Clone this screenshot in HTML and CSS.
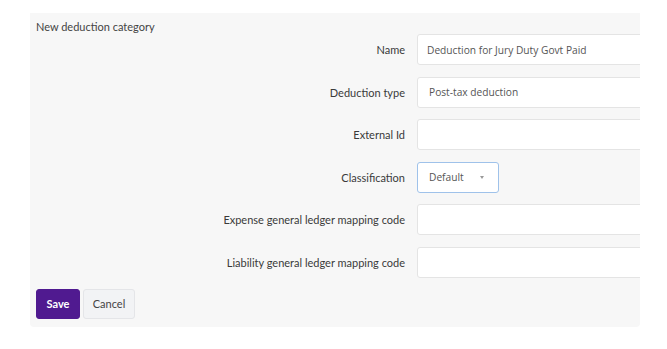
FILE: index.html
```html
<!DOCTYPE html>
<html>
<head>
<meta charset="utf-8">
<link rel="stylesheet" href="styles.css">
</head>
<body>
<div class="panel">
  <div class="title">New deduction category</div>
  <div class="form">
    <label class="label">Name</label>
    <div class="field"><div class="input">Deduction for Jury Duty Govt Paid</div></div>
    <label class="label">Deduction type</label>
    <div class="field"><div class="input pad12">Post-tax deduction</div></div>
    <label class="label">External Id</label>
    <div class="field"><div class="input"></div></div>
    <label class="label">Classification</label>
    <div class="field"><div class="select">Default<span class="caret"></span></div></div>
    <label class="label">Expense general ledger mapping code</label>
    <div class="field"><div class="input"></div></div>
    <label class="label">Liability general ledger mapping code</label>
    <div class="field"><div class="input"></div></div>
  </div>
  <div class="actions">
    <button class="btn save">Save</button>
    <button class="btn cancel">Cancel</button>
  </div>
</div>
</body>
</html>
```
FILE: styles.css
```css
html, body {
  margin: 0;
  padding: 0;
  background: #ffffff;
}
body {
  font-family: Lato, "Open Sans", sans-serif;
  color: #333;
}
.panel {
  margin: 13px 0 0 30px;
  width: 610px;
  height: 314px;
  background: #f7f7f7;
  border-radius: 0 0 4px 4px;
  overflow: hidden;
  padding: 0 6px;
  box-sizing: border-box;
}
.title {
  padding-top: 7px;
  font-size: 11px;
  line-height: 14px;
  color: #444;
}
.form {
  display: grid;
  grid-template-columns: 369px 300px;
  column-gap: 12px;
  row-gap: 11.6px;
  align-items: center;
}
.label {
  text-align: right;
  font-size: 11px;
  color: #3a3a3a;
}
.field {
  height: 31px;
}
.input {
  height: 31px;
  box-sizing: border-box;
  background: #fff;
  border: 1px solid #e4e4e4;
  border-radius: 3px;
  padding: 0 9px;
  display: flex;
  align-items: center;
  font-family: "Open Sans", sans-serif;
  font-size: 10.2px;
  color: #555;
  width: 300px;
}
.input.pad12 { padding-left: 11px; }
.select {
  width: 82px;
  height: 31px;
  box-sizing: border-box;
  background: #fff;
  border: 1px solid #9fc2ea;
  border-radius: 3px;
  padding: 0 11px;
  display: flex;
  align-items: center;
  justify-content: space-between;
  font-family: "Open Sans", sans-serif;
  font-size: 10.2px;
  color: #555;
}
.caret {
  width: 0;
  height: 0;
  border-left: 2.5px solid transparent;
  border-right: 2.5px solid transparent;
  border-top: 3px solid #999;
  margin-right: 3px;
}
.actions {
  display: flex;
  gap: 3px;
  margin-top: 11px;
}
.btn {
  height: 30px;
  border-radius: 3px;
  font-family: Lato, sans-serif;
  font-size: 11px;
  padding: 0;
  cursor: pointer;
}
.save {
  width: 44px;
  background: #501a90;
  color: #fff;
  font-weight: bold;
  border: 1px solid #501a90;
}
.cancel {
  width: 52px;
  background: #f2f3f5;
  color: #444;
  border: 1px solid #e4e5e8;
}
```
